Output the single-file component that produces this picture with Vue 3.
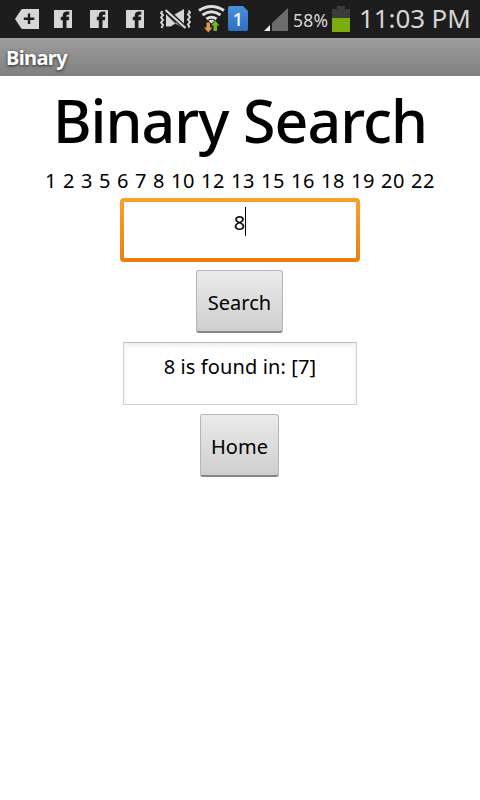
<script setup>
import { ref } from 'vue'

const numbers = [1, 2, 3, 5, 6, 7, 8, 10, 12, 13, 15, 16, 18, 19, 20, 22]
const query = ref('8')
const result = ref('8 is found in: [7]')
</script>

<template>
  <div class="screen">
    <header class="status">
      <svg class="tag" width="24" height="20" viewBox="0 0 24 20">
        <path d="M0 10 6 1Q6.700 0 8 0H24V20H8Q6.700 20 6 19Z" fill="#d6d6d6" />
        <path d="M14 4.500V15M8.800 9.800H19.300" stroke="#1d1d1d" stroke-width="2.400" />
      </svg>
      <svg v-for="n in 3" :key="n" class="social" width="18" height="18" viewBox="0 0 18 18">
        <path d="M0 0H18V18H0Z" fill="#d6d6d6" />
        <path d="M8.800 18V10.200H6.800V6.800H8.800V5.500Q8.800 1.600 12.800 1.600H15.300V4.800H13.700Q12.500 4.800 12.500 6V6.800H15.300L14.900 10.200H12.500V18Z" fill="#1d1d1d" />
      </svg>
      <svg class="mute" width="31" height="22" viewBox="0 0 31 22">
        <path d="M6 3.500V18.500H10.500L15.500 15.500 6 6Z" fill="#d6d6d6" />
        <path d="M14.500 6.500 24 1V16.500Z" fill="#d6d6d6" />
        <path d="M15.500 15.500 24 20.500V19L16 12Z" fill="#d6d6d6" />
        <path d="M5.500 2 25 19.500" stroke="#1d1d1d" stroke-width="4.500" />
        <path d="M5.500 2 25.500 20" stroke="#d6d6d6" stroke-width="2.300" />
        <path d="M2.500 3 1 5 3 7 1 9.500 3 12 1 14.500 3 17 1.500 20M28.500 2.500 30 4.500 28 6.500 30 9 28 11.500 30 14 28 16.500 29.500 19.500" fill="none" stroke="#d6d6d6" stroke-width="2" />
      </svg>
      <svg class="wifi" width="27" height="28" viewBox="0 0 27 28">
        <path d="M1 5.500Q13.500-2.500 26 5.500M4.500 10Q13.500 3.500 22.500 10M8.500 14Q13.500 10.500 18.500 14" fill="none" stroke="#dedede" stroke-width="2.900" />
        <path d="M10.500 15.700Q13.500 14 16.500 15.700L13.500 18.500Z" fill="#dedede" />
        <path d="M8.500 17.500H12V22.500H14.500L10.300 27.500 6 22.500H8.500Z" fill="#e29a43" />
        <path d="M17.300 15.500 21.500 20.500H19V26H15.500V20.500H13Z" fill="#73b51c" />
      </svg>
      <div class="sim">1</div>
      <svg class="signal" width="24" height="23" viewBox="0 0 24 23">
        <path d="M24 0V23H8V15Z" fill="#6c6c6c" />
        <path d="M6 17V23H0Z" fill="#eee" />
      </svg>
      <span class="percent">58%</span>
      <svg class="battery" width="18" height="26" viewBox="0 0 18 26">
        <path d="M5 0H13V3H18V12H0V3H5Z" fill="#3b3b3b" />
        <path d="M0 12H18V26H0Z" fill="#7aad10" />
      </svg>
      <span class="clock">11:03 PM</span>
    </header>
    <div class="titlebar"><span class="apptitle">Binary</span></div>
    <main class="content">
      <h1 class="heading"><span class="headtext">Binary Search</span></h1>
      <p class="numbers"><span class="numtext">{{ numbers.join(' ') }}</span></p>
      <div class="field focused"><span>{{ query }}</span><i class="caret"></i></div>
      <button class="btn search"><span>Search</span></button>
      <div class="field output"><span class="restext">{{ result }}</span></div>
      <button class="btn home"><span>Home</span></button>
    </main>
  </div>
</template>

<style>
body { background: #fff; }
</style>

<style scoped>
.screen {
  width: 480px;
  height: 800px;
  overflow: hidden;
  background: #fff;
  color: #000;
  font-family: "Noto Sans", "Open Sans", sans-serif;
}
.status {
  display: flex;
  align-items: flex-start;
  height: 38px;
  background: #1d1d1d;
  color: #d6d6d6;
  white-space: nowrap;
}
.status > * { flex: none; }
.tag { margin: 9px 15px 0 15px; }
.social { margin: 10px 18px 0 0; }
.mute { margin: 8px 7px 0 -2px; }
.wifi { margin: 5px 3px 0 0; }
.sim {
  width: 20px;
  height: 25px;
  margin: 6px 16px 0 0;
  background: linear-gradient(#4a90dc, #2c6fc4);
  clip-path: polygon(0 0, 75% 0, 100% 20%, 100% 100%, 0 100%);
  border-radius: 2px;
  color: #fff;
  font-size: 18px;
  font-weight: 500;
  line-height: 26px;
  text-align: center;
}
.signal { margin: 8px 5px 0 0; }
.percent {
  width: 39px;
  font-size: 17.5px;
  line-height: 40px;
  letter-spacing: 0.3px;
}
.battery { margin: 6px 9px 0 0; }
.clock {
  font-size: 26px;
  line-height: 36px;
  letter-spacing: -0.1px;
}
.titlebar {
  box-sizing: border-box;
  height: 38px;
  padding-left: 6px;
  background: linear-gradient(#9d9d9d, #7f7f7f);
  color: #fff;
  font-size: 20px;
  font-weight: 700;
  line-height: 39px;
  text-shadow: 0 1px 3px rgba(0, 0, 0, .75);
}
.apptitle { letter-spacing: -0.6px; }
.content {
  display: flex;
  flex-direction: column;
  align-items: center;
  font-size: 20px;
}
.heading, .numbers { margin: 0; white-space: nowrap; }
.heading {
  height: 86px;
  font-size: 59px;
  font-weight: 500;
  line-height: 88px;
}
.headtext { letter-spacing: -0.95px; }
.numbers { height: 36px; line-height: 38px; }
.numtext {
  letter-spacing: 0.56px;
  word-spacing: 0.24px;
}
.field {
  box-sizing: border-box;
  display: flex;
  justify-content: center;
  background: #fff;
  line-height: 30px;
  white-space: nowrap;
}
.focused {
  width: 240px;
  height: 64px;
  padding: 10px;
  border-radius: 4px;
  background: linear-gradient(#fff, #fff) 4px 4px / 232px 56px no-repeat, linear-gradient(#fba02f, #ec7d0b);
}
.caret {
  width: 1px;
  height: 29px;
  margin-top: -1px;
  background: #000;
}
.output {
  width: 234px;
  height: 63px;
  padding-top: 9px;
  border: 1px solid #cfcfcf;
  border-top-color: #b8b8b8;
  box-shadow: inset 0 3px 5px rgba(0, 0, 0, .07);
}
.restext { letter-spacing: 0.12px; }
.btn {
  box-sizing: border-box;
  height: 63px;
  padding: 0;
  border: 1px solid #b5b5b5;
  border-bottom: 2px solid #858585;
  border-radius: 3px;
  background: linear-gradient(#ebebeb, #cecece);
  color: #000;
  font: 20px/30px "Noto Sans", sans-serif;
}
.btn span { position: relative; top: 2px; }
.search { width: 87px; margin: 8px 1px 9px 0; }
.home { width: 79px; margin: 9px 1px 0 0; }
</style>
